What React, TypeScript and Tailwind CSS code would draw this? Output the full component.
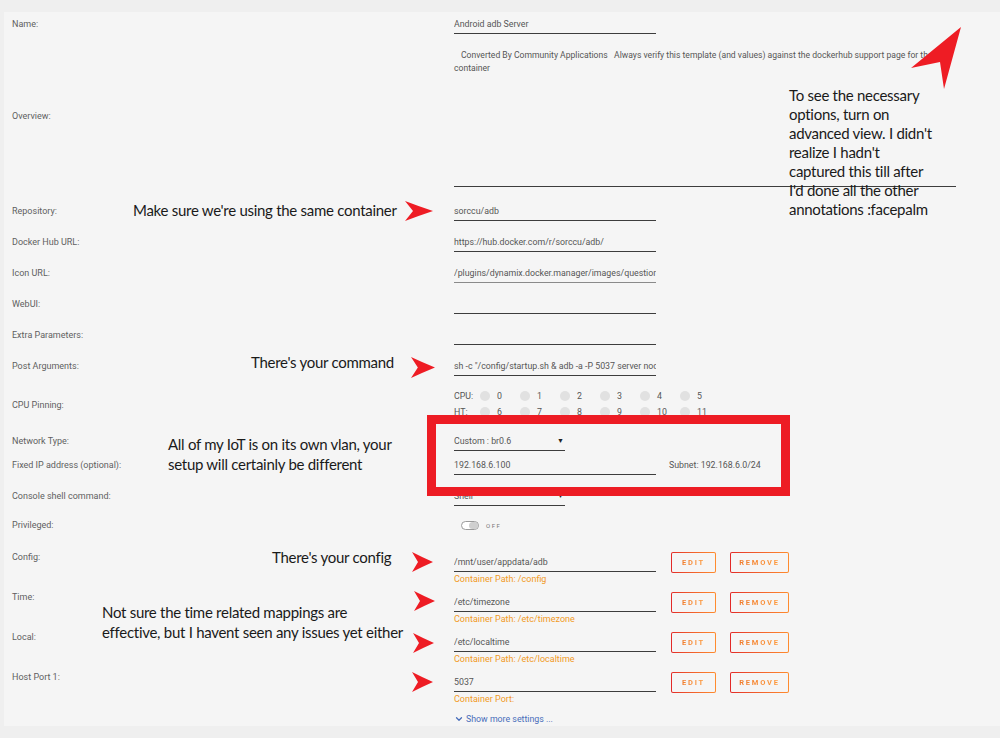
import { ChevronDown } from "lucide-react";

const labelCls = "w-[442px] shrink-0 text-[9px] leading-[20px] text-[#5f5f5f]";
const valueCls = "h-[20px] leading-[20px] text-[8.8px] text-[#555] border-b border-[#3d3d3d] whitespace-nowrap overflow-hidden";

function TextRow({ label, value = "", muted = false }: { label: string; value?: string; muted?: boolean }) {
    return (
        <div className="flex h-[31px]">
            <div className={labelCls}>{label}</div>
            <div className={`${valueCls} w-[202px] ${muted ? "border-[#8a8a8a]" : ""}`}>{value}</div>
        </div>
    );
}

function GradButton({ text, w }: { text: string; w: string }) {
    return (
        <div className={`h-[21px] ${w} rounded-[2px] bg-linear-to-r from-[#e22828] to-[#ff8c2f] p-[1px]`}>
            <div className="flex h-full w-full items-center justify-center rounded-[1px] bg-[#f5f5f5]">
                <span className="bg-linear-to-r from-[#f07b2c] to-[#ff9a3c] bg-clip-text text-[7.5px] font-bold tracking-[1.8px] text-transparent">{text}</span>
            </div>
        </div>
    );
}

function MappingRow({ label, value, sub }: { label: string; value: string; sub: string }) {
    return (
        <div className="flex h-[40px]">
            <div className="w-[442px] shrink-0 text-[9px] leading-[10px] text-[#5f5f5f]">{label}</div>
            <div className="flex flex-col">
                <div className={`${valueCls} w-[202px]`}>{value}</div>
                <div className="text-[9px] leading-[14px] text-[#f29a1f]">{sub}</div>
            </div>
            <div className="ml-[15px]">
                <GradButton text="EDIT" w="w-[45px]" />
            </div>
            <div className="ml-[14px]">
                <GradButton text="REMOVE" w="w-[59px]" />
            </div>
        </div>
    );
}

function Arrow({ className }: { className: string }) {
    return (
        <svg className={`absolute ${className}`} viewBox="0 0 28 20" preserveAspectRatio="none">
            <path d="M0 0 Q13 5 28 10 Q13 15 0 20 L8 10 Z" fill="#ee1c24" />
        </svg>
    );
}

const cpus = [
    ["0", "1", "2", "3", "4", "5"],
    ["6", "7", "8", "9", "10", "11"],
];

export default function App() {
    return (
        <div className="relative h-[738px] w-[1000px] overflow-hidden bg-[#efefef] font-['Roboto',sans-serif]">
            <div className="ml-[4px] mt-[12px] h-[714px] bg-[#f5f5f5] pl-[8px] pt-[2px]">
                <div className="flex h-[32px]">
                    <div className={labelCls}>Name:</div>
                    <div className={`${valueCls} w-[202px]`}>Android adb Server</div>
                </div>

                <div className="flex h-[155px]">
                    <div className="flex h-[141px] w-[442px] shrink-0 items-center text-[9px] text-[#5f5f5f]">Overview:</div>
                    <div className="h-[141px] w-[502px] border-b border-[#3d3d3d] pt-[3px] text-[8.6px] leading-[13px] text-[#555]">
                        <div className="whitespace-pre pl-[7px]">Converted By Community Applications   Always verify this template (and values) against the dockerhub support page for the</div>
                        <div>container</div>
                    </div>
                </div>

                <TextRow label="Repository:" value="sorccu/adb" />
                <TextRow label="Docker Hub URL:" value="https://hub.docker.com/r/sorccu/adb/" />
                <TextRow label="Icon URL:" value="/plugins/dynamix.docker.manager/images/question.png" muted />
                <TextRow label="WebUI:" />
                <TextRow label="Extra Parameters:" />
                <TextRow label="Post Arguments:" value={'sh -c "/config/startup.sh & adb -a -P 5037 server nodaemon"'} />

                <div className="flex h-[44px]">
                    <div className={`${labelCls} pt-[8px]`}>CPU Pinning:</div>
                    <div className="pt-[1px] text-[8.8px] leading-[16px] text-[#555]">
                        {cpus.map((row, i) => (
                            <div key={i} className="flex items-center">
                                <span className="w-[26px]">{i === 0 ? "CPU:" : "HT:"}</span>
                                {row.map((n) => (
                                    <span key={n} className="flex w-[40px] items-center gap-[7px]">
                                        <span className="h-[10px] w-[10px] rounded-full bg-[#e1e1e1]" />
                                        <span>{n}</span>
                                    </span>
                                ))}
                            </div>
                        ))}
                    </div>
                </div>

                <div className="flex h-[24px]">
                    <div className={labelCls}>Network Type:</div>
                    <div className={`${valueCls} flex w-[111px] justify-between pr-[1px]`}>
                        <span>Custom : br0.6</span>
                        <span className="text-[7px] text-[#222]">▼</span>
                    </div>
                </div>

                <div className="flex h-[31px]">
                    <div className={labelCls}>Fixed IP address (optional):</div>
                    <div className={`${valueCls} w-[202px]`}>192.168.6.100</div>
                    <div className="ml-[13px] text-[8.8px] leading-[20px] text-[#555]">Subnet: 192.168.6.0/24</div>
                </div>

                <div className="flex h-[29px]">
                    <div className={labelCls}>Console shell command:</div>
                    <div className={`${valueCls} flex w-[111px] justify-between pr-[1px]`}>
                        <span>Shell</span>
                        <span className="text-[7px] text-[#222]">▼</span>
                    </div>
                </div>

                <div className="flex h-[37px]">
                    <div className={labelCls}>Privileged:</div>
                    <div className="flex h-[20px] items-center pl-[7px]">
                        <div className="flex h-[9px] w-[18px] justify-end rounded-full border border-[#9a9a9a] bg-white">
                            <div className="h-full w-[9px] rounded-full bg-[#cfcfcf]" />
                        </div>
                        <span className="ml-[7px] text-[6px] tracking-[1.5px] text-[#777]">OFF</span>
                    </div>
                </div>

                <MappingRow label="Config:" value="/mnt/user/appdata/adb" sub="Container Path: /config" />
                <MappingRow label="Time:" value="/etc/timezone" sub="Container Path: /etc/timezone" />
                <MappingRow label="Local:" value="/etc/localtime" sub="Container Path: /etc/localtime" />
                <MappingRow label="Host Port 1:" value="5037" sub="Container Port:" />

                <div className="flex">
                    <div className="w-[442px] shrink-0" />
                    <div className="flex items-center gap-[2px] text-[8.8px] leading-[14px] text-[#486dba]">
                        <ChevronDown size={10} strokeWidth={3} />
                        <span>Show more settings ...</span>
                    </div>
                </div>
            </div>

            {/* annotations */}
            <div className="absolute inset-0 font-['Lato',sans-serif] text-[15px] tracking-[-0.28px] text-[#1a1a1a]">
                <div className="absolute left-[133px] top-[201px] leading-[19px]">Make sure we're using the same container</div>
                <Arrow className="left-[405px] top-[201px] h-[20px] w-[28px]" />

                <div className="absolute left-[789px] top-[86px] leading-[19px]">
                    To see the necessary
                    <br />
                    options, turn on
                    <br />
                    advanced view. I didn't
                    <br />
                    realize I hadn't
                    <br />
                    captured this till after
                    <br />
                    I'd done all the other
                    <br />
                    annotations :facepalm
                </div>
                <svg className="absolute left-[905px] top-[22px] h-[72px] w-[62px]" viewBox="0 0 62 72">
                    <path d="M56 5 L6 46 L35 40 L39 67 Z" fill="#ee1c24" />
                </svg>

                <div className="absolute left-[251px] top-[353px] leading-[19px]">There's your command</div>
                <Arrow className="left-[411px] top-[357px] h-[21px] w-[24px]" />

                <div className="absolute left-[168px] top-[434px] leading-[20px]">
                    All of my IoT is on its own vlan, your
                    <br />
                    setup will certainly be different
                </div>
                <div className="absolute left-[427px] top-[415px] h-[81px] w-[363px] border-[9px] border-[#ed1c24]" />

                <div className="absolute left-[272px] top-[548px] leading-[19px]">There's your config</div>
                <Arrow className="left-[412px] top-[552px] h-[20px] w-[21px]" />

                <div className="absolute left-[102px] top-[602px] leading-[20px]">
                    Not sure the time related mappings are
                    <br />
                    effective, but I havent seen any issues yet either
                </div>
                <Arrow className="left-[414px] top-[591px] h-[20px] w-[21px]" />
                <Arrow className="left-[413px] top-[633px] h-[20px] w-[21px]" />
                <Arrow className="left-[412px] top-[672px] h-[20px] w-[21px]" />
            </div>
        </div>
    );
}
